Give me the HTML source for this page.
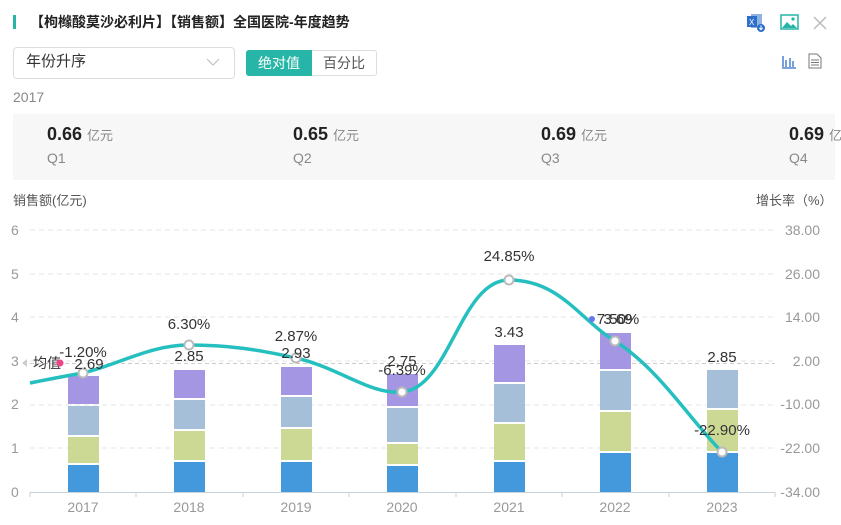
<!DOCTYPE html>
<html><head><meta charset="utf-8"><style>
*{margin:0;padding:0;box-sizing:border-box}
body{width:841px;height:525px;background:#fff;font-family:"Liberation Sans","Noto Sans CJK SC",sans-serif;position:relative;overflow:hidden;color:#333}
.abs{position:absolute}
</style></head><body>
<div class="abs" style="left:13px;top:15px;width:3px;height:14px;background:#26b5a6"></div>
<div class="abs" style="left:30px;top:12px;font-size:14px;font-weight:bold;color:#222;line-height:20px">【枸橼酸莫沙必利片】【销售额】全国医院-年度趋势</div>
<svg class="abs" style="left:746px;top:13px" width="20" height="20" viewBox="0 0 20 20"><rect x="5" y="1" width="11" height="14" fill="#8fb3e0"/><rect x="1" y="3" width="10" height="11" fill="#2f6fc9"/><text x="3" y="12" font-size="8" fill="#fff" font-family="Liberation Sans">X</text><circle cx="15" cy="15" r="4" fill="#2f6fc9"/><path d="M15 12.5v4M13.3 15l1.7 1.7 1.7-1.7" stroke="#fff" stroke-width="1" fill="none"/></svg>
<svg class="abs" style="left:780px;top:14px" width="19" height="16" viewBox="0 0 19 16"><rect x="1" y="1" width="17" height="14" fill="none" stroke="#26b5a6" stroke-width="1.5"/><path d="M2 14l5-6 4 4 2-2 4 4z" fill="#26b5a6"/><circle cx="13" cy="5" r="1.6" fill="#26b5a6"/></svg>
<svg class="abs" style="left:812px;top:15px" width="16" height="16" viewBox="0 0 16 16"><path d="M2 2l12 12M14 2L2 14" stroke="#bbb" stroke-width="1.5"/></svg>
<div class="abs" style="left:13px;top:47px;width:222px;height:32px;border:1px solid #ddd;border-radius:4px"></div>
<div class="abs" style="left:26px;top:52px;font-size:15px;line-height:20px;color:#333">年份升序</div>
<svg class="abs" style="left:206px;top:57px" width="14" height="10"><path d="M1 2l6 6 6-6" stroke="#bbb" fill="none"/></svg>
<div class="abs" style="left:246px;top:50px;width:131px;height:26px;border:1px solid #ddd;border-radius:3px"></div>
<div class="abs" style="left:246px;top:50px;width:66px;height:26px;background:#26b5a6;border-radius:3px 0 0 3px;color:#fff;font-size:14px;line-height:26px;text-align:center">绝对值</div>
<div class="abs" style="left:312px;top:50px;width:64px;height:26px;color:#555;font-size:14px;line-height:26px;text-align:center">百分比</div>
<svg class="abs" style="left:781px;top:53px" width="16" height="16" viewBox="0 0 16 16"><path d="M2 3v11M5 7v7M9 5v9M12 8v6M1 15h14" stroke="#2f6fc9" stroke-width="1.3" fill="none"/></svg>
<svg class="abs" style="left:808px;top:53px" width="14" height="16" viewBox="0 0 14 16"><path d="M1 1h8l4 4v10H1z" fill="none" stroke="#777"/><path d="M3 7h8M3 9.5h8M3 12h8" stroke="#777"/></svg>
<div class="abs" style="left:13px;top:89px;font-size:14px;color:#888">2017</div>
<div class="abs" style="left:13px;top:114px;width:822px;height:66px;background:#f7f7f7"></div>
<div class="abs" style="left:47px;top:124px;font-size:18px;font-weight:bold;color:#222">0.66 <span style="font-size:13px;font-weight:normal;color:#888">亿元</span></div>
<div class="abs" style="left:47px;top:150px;font-size:14px;color:#888">Q1</div>
<div class="abs" style="left:293px;top:124px;font-size:18px;font-weight:bold;color:#222">0.65 <span style="font-size:13px;font-weight:normal;color:#888">亿元</span></div>
<div class="abs" style="left:293px;top:150px;font-size:14px;color:#888">Q2</div>
<div class="abs" style="left:541px;top:124px;font-size:18px;font-weight:bold;color:#222">0.69 <span style="font-size:13px;font-weight:normal;color:#888">亿元</span></div>
<div class="abs" style="left:541px;top:150px;font-size:14px;color:#888">Q3</div>
<div class="abs" style="left:789px;top:124px;font-size:18px;font-weight:bold;color:#222;white-space:nowrap">0.69 <span style="font-size:13px;font-weight:normal;color:#888">亿元</span></div>
<div class="abs" style="left:789px;top:150px;font-size:14px;color:#888">Q4</div>
<div class="abs" style="left:13px;top:190px;font-size:13px;color:#555">销售额(亿元)</div>
<div class="abs" style="left:756px;top:190px;font-size:13px;color:#555">增长率（%）</div>
<svg class="abs" style="left:0;top:0" width="841" height="525" font-family="Liberation Sans,Noto Sans CJK SC,sans-serif">
<g stroke="#e3e6ea" stroke-dasharray="5,4"><path d="M30 230H775M30 274H775M30 317H775M30 361H775M30 405H775M30 448H775"/></g>
<path d="M30 492.5H775" stroke="#c9d1d9"/>
<g stroke="#c9d1d9"><path d="M30 492v5M136 492v5M243 492v5M349 492v5M456 492v5M562 492v5M669 492v5M775 492v5"/></g>
<g fill="#999" font-size="14" text-anchor="middle"><text x="83" y="512">2017</text><text x="189" y="512">2018</text><text x="296" y="512">2019</text><text x="402" y="512">2020</text><text x="509" y="512">2021</text><text x="615" y="512">2022</text><text x="722" y="512">2023</text></g>
<g fill="#999" font-size="14"><text x="11" y="497">0</text><text x="11" y="453">1</text><text x="11" y="409">2</text><text x="11" y="366">3</text><text x="11" y="322">4</text><text x="11" y="279">5</text><text x="11" y="235">6</text></g>
<g fill="#999" font-size="14" text-anchor="end"><text x="820" y="497">-34.00</text><text x="820" y="453">-22.00</text><text x="820" y="409">-10.00</text><text x="820" y="366">2.00</text><text x="820" y="322">14.00</text><text x="820" y="279">26.00</text><text x="820" y="235">38.00</text></g>
<path d="M30 363.5H775" stroke="#ccc" stroke-dasharray="4,3"/>
<g>
<g fill="#4499dd"><rect x="68" y="465" width="31" height="27"/><rect x="174" y="462" width="31" height="30"/><rect x="281" y="462" width="31" height="30"/><rect x="387" y="466" width="31" height="26"/><rect x="494" y="462" width="31" height="30"/><rect x="600" y="453" width="31" height="39"/><rect x="707" y="453" width="31" height="39"/></g>
<g fill="#cbd994"><rect x="68" y="437" width="31" height="26"/><rect x="174" y="431" width="31" height="29"/><rect x="281" y="429" width="31" height="31"/><rect x="387" y="444" width="31" height="20"/><rect x="494" y="424" width="31" height="36"/><rect x="600" y="412" width="31" height="39"/><rect x="707" y="410" width="31" height="41"/></g>
<g fill="#a6bfd8"><rect x="68" y="406" width="31" height="29"/><rect x="174" y="400" width="31" height="29"/><rect x="281" y="397" width="31" height="30"/><rect x="387" y="408" width="31" height="34"/><rect x="494" y="384" width="31" height="38"/><rect x="600" y="371" width="31" height="39"/><rect x="707" y="370" width="31" height="38"/></g>
<g fill="#a596e4"><rect x="68" y="376" width="31" height="28"/><rect x="174" y="370" width="31" height="28"/><rect x="281" y="367" width="31" height="28"/><rect x="387" y="374" width="31" height="32"/><rect x="494" y="345" width="31" height="37"/><rect x="600" y="333" width="31" height="36"/></g>
</g>
<path d="M30 383 C50 379 65 376 83 373 C120 364 150 345 189 345 C230 345 260 350 296 358 C340 368 370 395 402 392 C450 388 460 280 509 280 C560 280 580 320 615 341 C660 370 690 420 722 452" stroke="#26bfc0" stroke-width="3.5" fill="none"/>
<g fill="#fff" stroke="#bbb" stroke-width="2"><circle cx="83" cy="373" r="4.5"/><circle cx="189" cy="345" r="4.5"/><circle cx="296" cy="358" r="4.5"/><circle cx="402" cy="392" r="4.5"/><circle cx="509" cy="280" r="4.5"/><circle cx="615" cy="341" r="4.5"/><circle cx="722" cy="452" r="4.5"/></g>
<g fill="#333" font-size="15" text-anchor="middle"><text x="83" y="357">-1.20%</text><text x="89" y="369">2.69</text><text x="189" y="329">6.30%</text><text x="189" y="361">2.85</text><text x="296" y="341">2.87%</text><text x="296" y="358">2.93</text><text x="402" y="366">2.75</text><text x="402" y="375">-6.39%</text><text x="509" y="261">24.85%</text><text x="509" y="337">3.43</text><text x="618" y="324">7.50%</text><text x="618" y="324">3.69</text><text x="722" y="362">2.85</text><text x="722" y="435">-22.90%</text></g>
<path d="M22 363l5-4v8z" fill="#ccc"/>
<text x="33" y="368" font-size="14" fill="#333">均值</text>
<circle cx="60" cy="363" r="3.5" fill="#ee4488"/>
<circle cx="592" cy="319" r="3" fill="#6677ee"/>
</svg>
</body></html>
